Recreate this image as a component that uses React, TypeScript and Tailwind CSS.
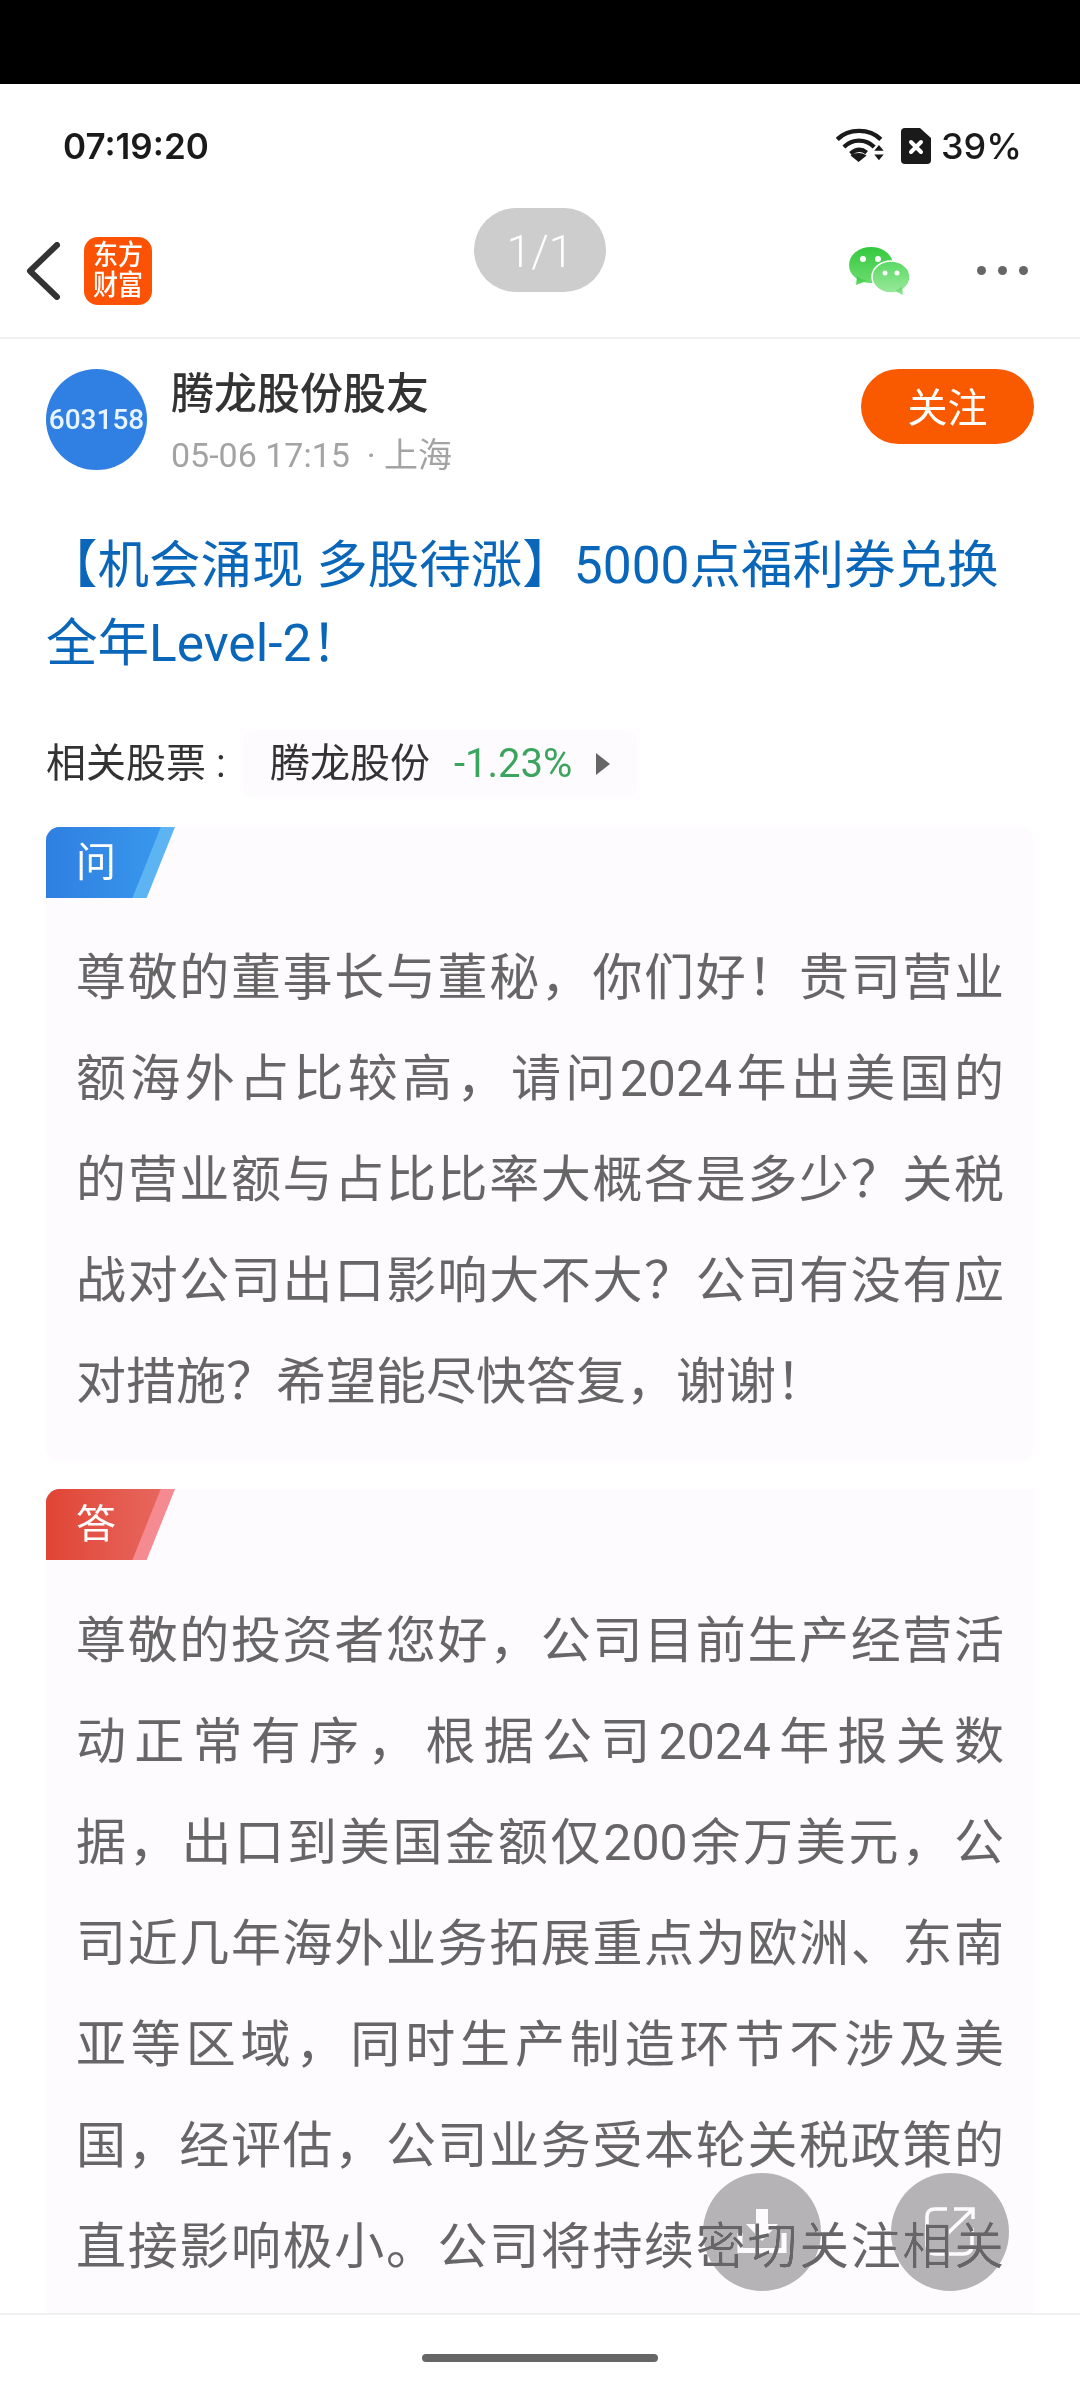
import React from "react";

const cjk = "font-['Roboto','Noto_Sans_CJK_SC',sans-serif]";

const question = [
  "尊敬的董事长与董秘，你们好！贵司营业",
  "额海外占比较高，请问2024年出美国的",
  "的营业额与占比比率大概各是多少？关税",
  "战对公司出口影响大不大？公司有没有应",
];

const answer = [
  "尊敬的投资者您好，公司目前生产经营活",
  "动正常有序，根据公司2024年报关数",
  "据，出口到美国金额仅200余万美元，公",
  "司近几年海外业务拓展重点为欧洲、东南",
  "亚等区域，同时生产制造环节不涉及美",
  "国，经评估，公司业务受本轮关税政策的",
  "直接影响极小。公司将持续密切关注相关",
];

const Line = ({ text, last }: { text: string; last?: boolean }) => (
  <p className={last ? "h-[101px] leading-[101px]" : "h-[101px] leading-[101px] [text-align-last:justify]"}>{text}</p>
);

const Tag = ({ label, red }: { label: string; red?: boolean }) => (
  <div className="relative h-[71px] w-[129px]">
    <div
      className={
        red
          ? "absolute inset-0 rounded-tl-[14px] bg-[#f58b91] [clip-path:polygon(0_0,100%_0,78%_100%,0_100%)]"
          : "absolute inset-0 rounded-tl-[14px] bg-[#5db4f2] [clip-path:polygon(0_0,100%_0,78%_100%,0_100%)]"
      }
    />
    <div
      className={
        red
          ? "absolute inset-0 rounded-tl-[14px] bg-gradient-to-r from-[#e04434] to-[#e86a62] [clip-path:polygon(0_0,89%_0,67%_100%,0_100%)]"
          : "absolute inset-0 rounded-tl-[14px] bg-gradient-to-r from-[#2f7fe0] to-[#3a9aee] [clip-path:polygon(0_0,89%_0,67%_100%,0_100%)]"
      }
    />
    <span className="absolute left-[30px] top-0 text-[40px] leading-[71px] text-white">{label}</span>
  </div>
);

export default function App() {
  return (
    <div className={`relative flex h-[2400px] w-[1080px] flex-col overflow-hidden bg-white ${cjk}`}>
      <div className="h-[84px] bg-black" />

      {/* status bar */}
      <div className="flex h-[124px] items-center justify-between pl-[63px] pr-[58px]">
        <span className="font-['Inter'] text-[35px] font-semibold text-[#1a1a1a]">07:19:20</span>
        <div className="flex items-center gap-[10px]">
          <svg className="mr-[6px]" width="50" height="36" viewBox="0 0 52 38">
            <path d="M2 12 C14 0 36 0 48 12" fill="none" stroke="#1a1a1a" strokeWidth="4.5" />
            <path d="M9 20 C18 11 32 11 41 20" fill="none" stroke="#1a1a1a" strokeWidth="4.5" />
            <path d="M16 27 C22 22 28 22 33 26" fill="none" stroke="#1a1a1a" strokeWidth="4.5" />
            <path d="M24.5 36 L16 29 Q24.5 24 33 29 Z" fill="#1a1a1a" />
            <path d="M41 24 L46 18 L51 24 Z M41 28 L51 28 L46 34 Z" fill="#1a1a1a" />
          </svg>
          <svg width="30" height="36" viewBox="0 0 30 36">
            <path d="M4 0 H19 L30 10 V32 Q30 36 26 36 H4 Q0 36 0 32 V4 Q0 0 4 0 Z" fill="#1a1a1a" />
            <path d="M10 14 L20 24 M20 14 L10 24" stroke="#fff" strokeWidth="4" strokeLinecap="round" />
          </svg>
          <span className="font-['Inter'] text-[36px] font-medium text-[#1a1a1a]">39%</span>
        </div>
      </div>

      {/* nav bar */}
      <div className="relative flex h-[131px] items-center justify-between border-b-2 border-[#f0f0f0] pb-[4px] pl-[26px] pr-[52px]">
        <div className="flex items-center gap-[24px]">
          <svg width="34" height="58" viewBox="0 0 34 58">
            <path d="M31 3 L4 29 L31 55" fill="none" stroke="#333" strokeWidth="6" strokeLinecap="round" strokeLinejoin="round" />
          </svg>
          <div className="flex h-[68px] w-[68px] items-center justify-center rounded-[14px] bg-[#fb5205] text-white">
            <div className="flex scale-y-[1.12] flex-col items-center text-[25px] font-medium leading-[26px]">
              <span>东方</span>
              <span>财富</span>
            </div>
          </div>
        </div>
        <div className="absolute left-[474px] top-0 flex h-[84px] w-[132px] items-center justify-center rounded-[42px] bg-[#cdcdcd] pt-[4px] text-[44px] font-light text-white">
          1/1
        </div>
        <div className="flex items-center gap-[66px]">
          <svg width="62" height="48" viewBox="0 0 62 48">
            <defs>
              <linearGradient id="chatBack" x1="0" y1="0" x2="0" y2="1">
                <stop offset="0" stopColor="#35c83f" />
                <stop offset="1" stopColor="#6bdc6f" />
              </linearGradient>
              <linearGradient id="chatFront" x1="0" y1="0" x2="0" y2="1">
                <stop offset="0" stopColor="#5ad964" />
                <stop offset="1" stopColor="#9ae89c" />
              </linearGradient>
            </defs>
            <ellipse cx="22" cy="18" rx="22" ry="18" fill="url(#chatBack)" />
            <path d="M8 30 L7 38 L18 34 Z" fill="url(#chatBack)" />
            <ellipse cx="42" cy="30" rx="19" ry="16" fill="url(#chatFront)" stroke="#fff" strokeWidth="1.5" />
            <path d="M46 44 L54 48 L53 40 Z" fill="url(#chatFront)" />
            <circle cx="14" cy="12" r="3" fill="#fff" />
            <circle cx="29" cy="12" r="3" fill="#fff" />
            <circle cx="36" cy="26" r="2.5" fill="#fff" />
            <circle cx="48" cy="26" r="2.5" fill="#fff" />
          </svg>
          <div className="flex gap-[12px]">
            <span className="h-[9px] w-[9px] rounded-full bg-[#666]" />
            <span className="h-[9px] w-[9px] rounded-full bg-[#666]" />
            <span className="h-[9px] w-[9px] rounded-full bg-[#666]" />
          </div>
        </div>
      </div>

      <div className="relative flex-1 px-[46px]">
        {/* author row */}
        <div className="mt-[30px] flex items-start">
          <div className="flex h-[101px] w-[101px] items-center justify-center rounded-full bg-[#2f80e2] font-['Roboto'] text-[28px] font-medium text-[#e8f4ff]">
            603158
          </div>
          <div className="ml-[24px] flex-1">
            <div className="text-[43px] font-medium leading-[50px] text-[#333]">腾龙股份股友</div>
            <div className="mt-[16px] whitespace-pre text-[34px] leading-[40px] text-[#a3a3a3]">05-06 17:15  · 上海</div>
          </div>
          <div className="flex h-[75px] w-[173px] items-center justify-center rounded-full bg-[#f95a00] pt-[4px] text-[40px] text-white">
            关注
          </div>
        </div>

        {/* headline */}
        <h1 className="mt-[52px] text-[51.5px] font-normal leading-[78px] text-[#0a66b8]">
          【机会涌现 多股待涨】5000点福利券兑换全年Level-2！
        </h1>

        {/* related stock */}
        <div className="mt-[47px] flex items-center">
          <span className="w-[196px] shrink-0 whitespace-pre text-[40px] text-[#333]">相关股票 :</span>
          <div className="flex h-[67px] w-[396px] items-center rounded-[12px] bg-[#fefbff] pl-[28px]">
            <span className="text-[40px] text-[#333]">腾龙股份</span>
            <span className="ml-[24px] text-[40px] text-[#3ba55d]">-1.23%</span>
            <span className="ml-[24px] h-0 w-0 border-y-[11px] border-l-[14px] border-y-transparent border-l-[#666]" />
          </div>
        </div>

        {/* question */}
        <div className="mt-[30px] h-[634px] rounded-[12px] bg-[#fefbff]">
          <Tag label="问" />
          <div className="px-[30px] pt-[30px] text-[50px] text-[#666]">
            {question.map((t) => (
              <Line key={t} text={t} />
            ))}
            <Line text="对措施？希望能尽快答复，谢谢！" last />
          </div>
        </div>

        {/* answer */}
        <div className="mt-[28px] h-[825px] bg-[#fefbff]">
          <Tag label="答" red />
          <div className="px-[30px] pt-[31px] text-[50px] text-[#666]">
            {answer.map((t) => (
              <Line key={t} text={t} />
            ))}
          </div>
        </div>
      </div>

      {/* floating actions, the copy stays readable through them */}
      <div className="absolute left-[703px] top-[2173px] flex h-[118px] w-[118px] items-center justify-center rounded-full bg-[#b5b3b6] mix-blend-darken">
        <svg width="50" height="46" viewBox="0 0 50 46">
          <path d="M19 0 H31 V15 H41 L25 32 L9 15 H19 Z" fill="#fff" />
          <path d="M3 24 V41.5 H47 V24" fill="none" stroke="#fff" strokeWidth="5" />
        </svg>
      </div>
      <div className="absolute left-[891px] top-[2173px] flex h-[118px] w-[118px] items-center justify-center rounded-full bg-[#b5b3b6] mix-blend-darken">
        <svg width="50" height="50" viewBox="0 0 50 50">
          <path d="M22 2 H10 Q2 2 2 10 V38 Q2 47 10 47 H38 Q47 47 47 38 V21" fill="none" stroke="#fff" strokeWidth="3.5" />
          <path d="M29 2 H48 V12 M48 2 L21 28" fill="none" stroke="#fff" strokeWidth="3.5" />
        </svg>
      </div>

      {/* bottom bar */}
      <div className="absolute bottom-0 left-0 flex h-[87px] w-full items-center justify-center border-t-2 border-[#f0f0f0] bg-white">
        <span className="h-[8px] w-[236px] rounded-full bg-[#666]" />
      </div>
    </div>
  );
}
